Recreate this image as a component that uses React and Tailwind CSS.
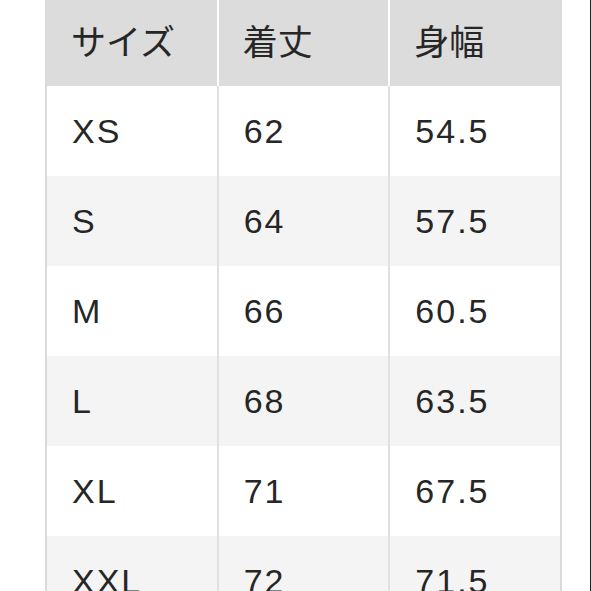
const headers = ['サイズ', '着丈', '身幅'];

const rows = [
    ['XS', '62', '54.5'],
    ['S', '64', '57.5'],
    ['M', '66', '60.5'],
    ['L', '68', '63.5'],
    ['XL', '71', '67.5'],
    ['XXL', '72', '71.5'],
];

const font = { fontFamily: '"Liberation Sans", "Noto Sans CJK JP", sans-serif' };

const App = () => {
    return (
        <div className="flex w-[591px] h-[591px] overflow-hidden bg-white" style={font}>
            <div className="w-[45px] shrink-0" />
            <div className="w-[517px] shrink-0 border-x-2 border-[#dadada] self-start">
                <div className="flex h-[86px] bg-[#dcdcdc]">
                    {headers.map((h, i) => (
                        <div
                            key={h}
                            className={`flex items-center pl-[24px] text-[35px] text-[#262626] ${i === 0 ? 'w-[170px]' : 'w-[172px] border-l-2 border-white'} ${i === 2 ? 'w-[171px]' : ''}`}
                        >
                            {h}
                        </div>
                    ))}
                </div>
                {rows.map((r, ri) => (
                    <div key={r[0]} className={`flex h-[90px] ${ri % 2 === 0 ? 'bg-white' : 'bg-[#f4f4f4]'}`}>
                        {r.map((c, i) => (
                            <div
                                key={i}
                                className={`flex items-center pl-[25px] text-[34px] tracking-[2px] text-[#262626] ${i === 0 ? 'w-[170px]' : 'w-[172px] border-l-2 border-[#e0e0e0]'} ${i === 2 ? 'w-[171px]' : ''}`}
                            >
                                {c}
                            </div>
                        ))}
                    </div>
                ))}
            </div>
            <div className="flex-1" />
            <div className="w-px shrink-0 bg-[#222222]" />
        </div>
    );
};

export default App;
